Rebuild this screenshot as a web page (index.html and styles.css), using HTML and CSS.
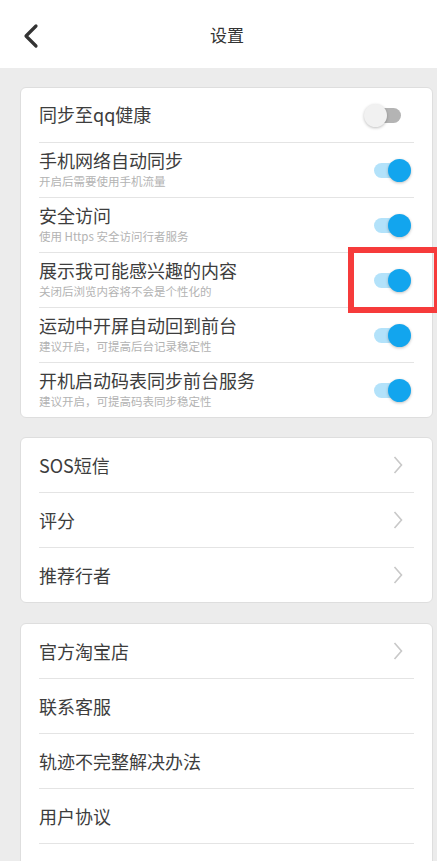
FILE: index.html
```html
<!DOCTYPE html>
<html lang="zh-CN">
<head>
<meta charset="UTF-8">
<meta name="viewport" content="width=device-width, initial-scale=1.0">
<title>设置</title>
<link rel="stylesheet" href="styles.css">
</head>
<body>
<div class="header">
    <svg class="back" width="20" height="26" viewBox="0 0 20 26">
        <path d="M14 3 L4 13 L14 23" fill="none" stroke="#333" stroke-width="3.2" stroke-linecap="round" stroke-linejoin="round"/>
    </svg>
    <div class="title">设置</div>
</div>

<div class="card">
    <div class="row">
        <div class="text"><div class="name">同步至qq健康</div></div>
        <div class="switch"><span class="track"></span><span class="thumb"></span></div>
    </div>
    <div class="row">
        <div class="text">
            <div class="name">手机网络自动同步</div>
            <div class="sub">开启后需要使用手机流量</div>
        </div>
        <div class="switch on"><span class="track"></span><span class="thumb"></span></div>
    </div>
    <div class="row">
        <div class="text">
            <div class="name">安全访问</div>
            <div class="sub">使用 Https 安全访问行者服务</div>
        </div>
        <div class="switch on"><span class="track"></span><span class="thumb"></span></div>
    </div>
    <div class="row">
        <div class="text">
            <div class="name">展示我可能感兴趣的内容</div>
            <div class="sub">关闭后浏览内容将不会是个性化的</div>
        </div>
        <div class="switch on"><span class="track"></span><span class="thumb"></span></div>
        <div class="mark"></div>
    </div>
    <div class="row">
        <div class="text">
            <div class="name">运动中开屏自动回到前台</div>
            <div class="sub">建议开启，可提高后台记录稳定性</div>
        </div>
        <div class="switch on"><span class="track"></span><span class="thumb"></span></div>
    </div>
    <div class="row">
        <div class="text">
            <div class="name">开机启动码表同步前台服务</div>
            <div class="sub">建议开启，可提高码表同步稳定性</div>
        </div>
        <div class="switch on"><span class="track"></span><span class="thumb"></span></div>
    </div>
</div>

<div class="card">
    <div class="row">
        <div class="name">SOS短信</div>
        <svg class="arrow" width="10" height="20" viewBox="0 0 10 20"><path d="M1.5 2 L8.5 10 L1.5 18" fill="none" stroke="#c8c8c8" stroke-width="1.6"/></svg>
    </div>
    <div class="row">
        <div class="name">评分</div>
        <svg class="arrow" width="10" height="20" viewBox="0 0 10 20"><path d="M1.5 2 L8.5 10 L1.5 18" fill="none" stroke="#c8c8c8" stroke-width="1.6"/></svg>
    </div>
    <div class="row">
        <div class="name">推荐行者</div>
        <svg class="arrow" width="10" height="20" viewBox="0 0 10 20"><path d="M1.5 2 L8.5 10 L1.5 18" fill="none" stroke="#c8c8c8" stroke-width="1.6"/></svg>
    </div>
</div>

<div class="card last">
    <div class="row">
        <div class="name">官方淘宝店</div>
        <svg class="arrow" width="10" height="20" viewBox="0 0 10 20"><path d="M1.5 2 L8.5 10 L1.5 18" fill="none" stroke="#c8c8c8" stroke-width="1.6"/></svg>
    </div>
    <div class="row"><div class="name">联系客服</div></div>
    <div class="row"><div class="name">轨迹不完整解决办法</div></div>
    <div class="row"><div class="name">用户协议</div></div>
    <div class="row"></div>
</div>
</body>
</html>
```

FILE: styles.css
```css
body {
    margin: 0;
    background-color: #ececec;
    font-family: "Noto Sans CJK SC", "Noto Sans", sans-serif;
    color: #3d3d3d;
    overflow: hidden;
}
.header {
    height: 68px;
    background-color: #fff;
    display: flex;
    align-items: center;
    justify-content: center;
    position: relative;
}
.header .back {
    position: absolute;
    left: 22px;
    top: 23px;
}
.header .title {
    font-size: 17px;
    color: #333;
    margin-left: 17px;
}
.card {
    margin: 19px 4px 0 20px;
    background-color: #fff;
    border: 1px solid #dedede;
    border-radius: 6px;
}
.card + .card {
    margin-top: 19px;
}
.card.last {
    margin-top: 20px;
}
.row {
    height: 54px;
    margin: 0 18px;
    border-bottom: 1px solid #e4e4e4;
    display: flex;
    align-items: center;
    justify-content: space-between;
    position: relative;
}
.card .row:last-child {
    border-bottom: none;
}
.name {
    font-size: 18px;
    line-height: 22px;
    color: #3d3d3d;
}
.sub {
    font-size: 11.5px;
    line-height: 15px;
    color: #b3b3b3;
    margin-top: 3px;
}
.text {
    margin-top: -2px;
}
.switch {
    width: 47px;
    height: 23px;
    position: relative;
    margin-right: 3px;
}
.switch .track {
    position: absolute;
    left: 10px;
    top: 4px;
    width: 27px;
    height: 15px;
    border-radius: 8px;
    background-color: #b4b4b4;
}
.switch .thumb {
    position: absolute;
    left: 0;
    top: 0;
    width: 23px;
    height: 23px;
    border-radius: 50%;
    background-color: #f1f1f1;
    box-shadow: 0 1px 3px rgba(0, 0, 0, 0.25);
}
.switch.on .track {
    background-color: #b3e2fa;
}
.switch.on .thumb {
    left: 24px;
    background-color: #12a5ee;
}
.arrow {
    margin-right: 11px;
}
.mark {
    position: absolute;
    left: 309px;
    top: -6px;
    width: 80px;
    height: 54px;
    border: 6px solid #f63b3b;
}
```
